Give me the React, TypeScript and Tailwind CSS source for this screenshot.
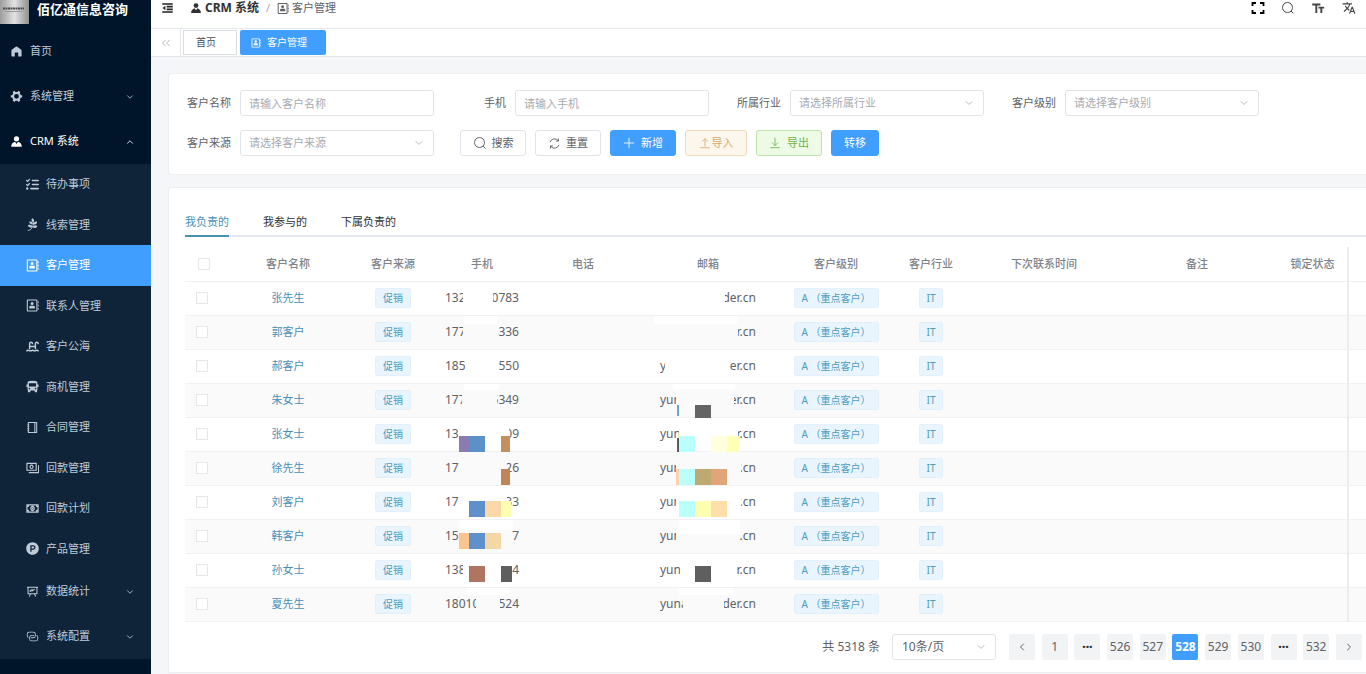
import React from 'react';
import { ChevronDown, ChevronLeft, ChevronRight, ChevronUp, ChevronsLeft } from 'lucide-react';
import { FaListCheck, FaPagelines, FaProductHunt, FaWaterLadder } from 'react-icons/fa6';
import { MdFormatSize, MdTranslate } from 'react-icons/md';
import clsx from 'clsx';

type IconProps = { className?: string };
type IconType = React.ComponentType<IconProps>;

const filledIcon = (d: string): React.FC<IconProps> => ({ className }) => (
  <svg viewBox="0 0 1024 1024" fill="currentColor" fillRule="evenodd" className={className} aria-hidden="true">
    <path d={d} />
  </svg>
);

const HomeIcon = filledIcon('M512 110 Q540 110 570 134L880 380Q912 408 912 448V850Q912 900 862 900H650V650Q650 600 600 600H424Q374 600 374 650V900H162Q112 900 112 850V448Q112 408 144 380L454 134Q484 110 512 110z');
const ToolsIcon = filledIcon('M764.416 254.72a351.68 351.68 0 0 1 86.336 149.184H960v192.064H850.752a351.68 351.68 0 0 1-86.336 149.312l54.72 94.72-166.272 96-54.592-94.72a352.64 352.64 0 0 1-172.48 0L371.136 936l-166.272-96 54.72-94.72a351.68 351.68 0 0 1-86.336-149.312H64v-192h109.248a351.68 351.68 0 0 1 86.336-149.312L204.8 160l166.208-96h.192l54.656 94.592a352.64 352.64 0 0 1 172.48 0L652.8 64h.128L819.2 160l-54.72 94.72zM704 499.968a192 192 0 1 0-384 0 192 192 0 0 0 384 0z');
const AvatarIcon = filledIcon('M628.736 528.896A416 416 0 0 1 928 928H96a415.872 415.872 0 0 1 299.264-399.104L512 704l116.736-175.104zM720 304a208 208 0 1 1-416 0 208 208 0 0 1 416 0z');
const LinkIcon = filledIcon('M640 384v64H448a128 128 0 0 0-128 128v128a128 128 0 0 0 128 128h320a128 128 0 0 0 128-128V576a128 128 0 0 0-64-110.848V394.88c74.56 26.368 128 97.472 128 181.056v128a192 192 0 0 1-192 192H448a192 192 0 0 1-192-192V576a192 192 0 0 1 192-192h192zM384 640v-64h192a128 128 0 0 0 128-128V320a128 128 0 0 0-128-128H256a128 128 0 0 0-128 128v128a128 128 0 0 0 64 110.848v70.272A192.064 192.064 0 0 1 64 448V320a192 192 0 0 1 192-192h320a192 192 0 0 1 192 192v128a192 192 0 0 1-192 192H384z');
const FoldIcon = filledIcon('M64 110h896v130H64zM440 330h520v130H440zM440 564h520v130H440zM64 784h896v130H64zM330 330v364L90 512z');
const ContactIcon = filledIcon('M60 110q0-70 70-70h700q70 0 70 70v804q0 70-70 70H130q-70 0-70-70zM145 125v774h670V125zM480 240a120 120 0 1 1 0 240a120 120 0 1 1 0-240zM260 740V640q0-110 110-110h220q110 0 110 110v100zM930 180h64v160h-64zM930 430h64v160h-64zM930 680h64v160h-64z');
const BusIcon = filledIcon('M512 50q300 0 370 90q20 30 20 90v120h60q30 0 30 30v150q0 30-30 30h-60v200q0 40-30 50v110q0 50-50 50h-90q-50 0-50-50v-100H342v100q0 50-50 50h-90q-50 0-50-50V810q-30-10-30-50V560H62q-30 0-30-30V380q0-30 30-30h60V230q0-60 20-90Q212 50 512 50zM230 250v260h564V250zM270 620a60 60 0 1 0 0 120a60 60 0 1 0 0-120zM754 620a60 60 0 1 0 0 120a60 60 0 1 0 0-120z');

const lineIcon = (d: string, strokeWidth = 1): React.FC<IconProps> => ({ className }) => (
  <svg viewBox="0 0 14 14" fill="none" stroke="currentColor" strokeWidth={strokeWidth} className={className} aria-hidden="true">
    <path d={d} />
  </svg>
);

const NotebookIcon = lineIcon('M2.5 1.500h9v11h-9zM9.500 1.500v11M1.500 4h2M1.500 6h2M1.500 8h2M1.500 10h2', 1.1);
const CashStackIcon = lineIcon('M1 2.500h10v7.500h-10zM3 12.500h10.500v-8M6 4.500a1.600 1.800 0 1 0 .01 0z', 1.2);
const BanknoteIcon = lineIcon('M1 3h12v8h-12zM1 5.200q2 0 2-2M13 5.200q-2 0-2-2M1 8.800q2 0 2 2M13 8.800q-2 0-2 2M7 4.800a1.800 2.200 0 1 0 .01 0zM7 6v2', 1.3);
const BoardIcon = lineIcon('M1 2.500h12M2.200 2.500v7h9.600v-7M5 9.500l-1.500 3M9 9.500l1.500 3M4.500 7.500v-1.500l2-1v1.500l3-2', 1.1);
const SearchIcon = lineIcon('M6.500 1.500a5 5 0 1 0 .01 0zM10 10l2.500 2.500');
const RefreshIcon = lineIcon('M2.200 5.600A5 5 0 0 1 11 4M11.300 1.600v2.800h-2.800M11.800 8.400A5 5 0 0 1 3 10M2.700 12.400v-2.800h2.800');
const PlusIcon = lineIcon('M7 1v12M1 7h12');
const UploadIcon = lineIcon('M7 11v-9M3.500 5.500l3.500-3.500 3.500 3.500M1.500 12.500h11');
const DownloadIcon = lineIcon('M7 1v9M3.500 6.500l3.500 3.500 3.500-3.500M1.500 12.500h11');
const FullscreenIcon = lineIcon('M1.500 5v-3h3.500M9 2h3.500v3M12.500 9v3h-3.500M5 12h-3.500v-3', 1.8);

const SUB_MENU: { label: string; icon: IconType; active?: boolean }[] = [
  { label: '待办事项', icon: FaListCheck },
  { label: '线索管理', icon: FaPagelines },
  { label: '客户管理', icon: ContactIcon, active: true },
  { label: '联系人管理', icon: ContactIcon },
  { label: '客户公海', icon: FaWaterLadder },
  { label: '商机管理', icon: BusIcon },
  { label: '合同管理', icon: NotebookIcon },
  { label: '回款管理', icon: CashStackIcon },
  { label: '回款计划', icon: BanknoteIcon },
  { label: '产品管理', icon: FaProductHunt },
];

interface MenuItemProps {
  label: string;
  icon: IconType;
  nested?: boolean;
  open?: boolean;
  expandable?: boolean;
}

const MenuItem: React.FC<MenuItemProps> = ({ label, icon: Icon, nested, open, expandable }) => (
  <a
    href="#"
    className={clsx('flex h-[45px] items-center gap-[7px] pr-4', nested ? 'pl-[26px]' : 'pl-[10px]', open ? 'text-white' : 'text-[#bfcbd9]')}
  >
    <Icon className="h-[13px] w-[13px]" />
    <span className="flex-1">{label}</span>
    {expandable && (open ? <ChevronUp className="h-[10px] w-[10px]" /> : <ChevronDown className="h-[10px] w-[10px]" />)}
  </a>
);

const Sidebar: React.FC = () => (
  <aside className="w-[151px] shrink-0 bg-[#001529] text-[11px]">
    <div className="flex h-[29px] items-start gap-2">
      <svg viewBox="0 0 29 24" className="h-6 w-[29px]" aria-hidden="true">
        <defs>
          <linearGradient id="logo" x1="0" y1="0" x2="1" y2="0">
            <stop offset="0" stopColor="#9c9c9c" />
            <stop offset="0.5" stopColor="#e2e2e2" />
            <stop offset="1" stopColor="#8f8f8f" />
          </linearGradient>
        </defs>
        <rect width="29" height="24" fill="url(#logo)" />
        <path d="M3 8.500h21" stroke="#4d4d4d" strokeWidth="2" strokeDasharray="2 .5" />
        <path d="M5 11.500h17" stroke="#9a9a9a" />
      </svg>
      <h1 className="text-[13px] leading-[18px] font-bold whitespace-nowrap text-white">佰亿通信息咨询</h1>
    </div>
    <nav>
      <MenuItem label="首页" icon={HomeIcon} />
      <MenuItem label="系统管理" icon={ToolsIcon} expandable />
      <MenuItem label="CRM 系统" icon={AvatarIcon} expandable open />
      <div className="bg-[#0f2438]">
        <div className="grid h-[405px] auto-rows-fr">
          {SUB_MENU.map(({ label, icon: Icon, active }) => (
            <a
              key={label}
              href="#"
              className={clsx('flex items-center gap-[7px] pl-[26px]', active ? 'bg-[#409eff] text-white' : 'text-[#bfcbd9]')}
            >
              <Icon className="h-[13px] w-[13px]" />
              {label}
            </a>
          ))}
        </div>
        <MenuItem label="数据统计" icon={BoardIcon} nested expandable />
        <MenuItem label="系统配置" icon={LinkIcon} nested expandable />
      </div>
    </nav>
  </aside>
);

const Header: React.FC = () => (
  <header className="bg-white">
    <div className="flex h-[29px] items-center justify-between border-b border-[#e4e7ed] pr-[10px] pb-3 pl-[10px]">
      <div className="flex items-center">
        <button type="button" aria-label="折叠菜单" className="mr-4 text-[#222]">
          <FoldIcon className="h-3 w-[13px]" />
        </button>
        <nav className="flex items-center text-[11px] text-[#606266]">
          <a href="#" className="flex items-center gap-[3px] text-[12px] font-bold text-[#303133]">
            <AvatarIcon className="h-3 w-3" />
            CRM 系统
          </a>
          <span className="mx-[7px] text-[#a8abb2]">/</span>
          <ContactIcon className="mr-[3px] h-[13px] w-3" />
          客户管理
        </nav>
      </div>
      <div className="flex items-center gap-4 text-[#444]">
        <button type="button" aria-label="全屏" className="text-black"><FullscreenIcon className="h-[14px] w-[14px]" /></button>
        <button type="button" aria-label="搜索"><SearchIcon className="h-[14px] w-[14px]" /></button>
        <button type="button" aria-label="字号"><MdFormatSize className="h-[15px] w-[15px] -scale-x-100" /></button>
        <button type="button" aria-label="语言"><MdTranslate className="h-[14px] w-[14px]" /></button>
      </div>
    </div>
    <div className="flex h-7 items-center border-b border-[#e4e7ed] text-[10px]">
      <button type="button" aria-label="向左滚动" className="mr-[2px] flex h-full w-[30px] items-center justify-center border-r border-[#e4e7ed] text-[#a8abb2]">
        <ChevronsLeft className="h-[14px] w-[14px]" strokeWidth={1.5} />
      </button>
      <a href="#" className="mr-[3px] flex h-[25px] w-[54px] items-center justify-center border border-[#d8dce5] pr-2 text-[#495060]">首页</a>
      <a href="#" className="flex h-[25px] w-[86px] items-center gap-[6px] rounded-[2px] bg-[#409eff] pl-[11px] text-white">
        <ContactIcon className="h-[10px] w-[10px]" />
        客户管理
      </a>
    </div>
  </header>
);

interface FieldProps {
  id: string;
  label: string;
  placeholder: string;
  select?: boolean;
}

const Field: React.FC<FieldProps> = ({ id, label, placeholder, select }) => (
  <div className="flex items-center gap-[9px]">
    <label htmlFor={id} className="w-[46px] text-right whitespace-nowrap text-[#606266]">{label}</label>
    {select ? (
      <div className="relative">
        <select id={id} className="h-[26px] w-[194px] appearance-none rounded-[3px] border border-[#e0e3e9] bg-white px-2 text-[#a8abb2]">
          <option>{placeholder}</option>
        </select>
        <ChevronDown className="pointer-events-none absolute top-[7px] right-[9px] h-3 w-3 text-[#b8bbc2]" strokeWidth={2} />
      </div>
    ) : (
      <input id={id} type="text" placeholder={placeholder} className="h-[26px] w-[194px] rounded-[3px] border border-[#e0e3e9] bg-white px-2 placeholder:text-[#a8abb2]" />
    )}
  </div>
);

const BUTTON = 'flex h-[26px] items-center justify-center rounded-[3px] border';

const SearchPanel: React.FC = () => (
  <section className="rounded-l-[3px] border border-r-0 border-[#eceef2] bg-white px-4 pt-4 pb-[18px]">
    <form className="flex flex-wrap gap-x-[26px] gap-y-[14px]">
      <Field id="name" label="客户名称" placeholder="请输入客户名称" />
      <Field id="phone" label="手机" placeholder="请输入手机" />
      <Field id="industry" label="所属行业" placeholder="请选择所属行业" select />
      <Field id="level" label="客户级别" placeholder="请选择客户级别" select />
      <Field id="source" label="客户来源" placeholder="请选择客户来源" select />
      <div className="flex gap-[9px]">
        <button type="button" className={clsx(BUTTON, 'w-[66px] gap-[5px] border-[#e0e3e9] bg-white text-[#606266]')}>
          <SearchIcon className="h-[14px] w-[14px]" />搜索
        </button>
        <button type="button" className={clsx(BUTTON, 'w-[66px] gap-[5px] border-[#e0e3e9] bg-white text-[#606266]')}>
          <RefreshIcon className="h-[13px] w-[13px]" />重置
        </button>
        <button type="button" className={clsx(BUTTON, 'w-[66px] gap-[6px] border-[#409eff] bg-[#409eff] text-white')}>
          <PlusIcon className="h-3 w-3" />新增
        </button>
        <button type="button" className={clsx(BUTTON, 'w-[62px] gap-[1px] border-[#f0dcbb] bg-[#fdf6ec] text-[#d3ab6c]')}>
          <UploadIcon className="h-3 w-3" />导入
        </button>
        <button type="button" className={clsx(BUTTON, 'w-[66px] gap-[6px] border-[#bfe3ad] bg-[#edfae6] text-[#6fb24d]')}>
          <DownloadIcon className="h-3 w-3" />导出
        </button>
        <button type="button" className={clsx(BUTTON, 'w-12 border-[#409eff] bg-[#409eff] text-white')}>转移</button>
      </div>
    </form>
  </section>
);

// left, top, width, height, color
type Block = [number, number, number, number, string];

interface MaskedValue {
  head: string;
  headWidth: number;
  tail: string;
  tailWidth: number;
  blocks?: Block[];
}

interface Customer {
  name: string;
  phone: MaskedValue;
  email: MaskedValue;
}

const CUSTOMERS: Customer[] = [
  {
    name: '张先生',
    phone: { head: '132', headWidth: 18, tail: '0783', tailWidth: 26 },
    email: { head: '', headWidth: 0, tail: 'der.cn', tailWidth: 31 },
  },
  {
    name: '郭客户',
    phone: { head: '177', headWidth: 18, tail: '8336', tailWidth: 21, blocks: [[19, 0, 33, 8, '#fff']] },
    email: { head: '', headWidth: 0, tail: 'r.cn', tailWidth: 18, blocks: [[-6, 0, 83, 8, '#fff']] },
  },
  {
    name: '郝客户',
    phone: { head: '185', headWidth: 20, tail: '550', tailWidth: 21 },
    email: { head: 'y', headWidth: 5, tail: 'er.cn', tailWidth: 26 },
  },
  {
    name: '朱女士',
    phone: { head: '177', headWidth: 17, tail: '5349', tailWidth: 22, blocks: [[19, 0, 34, 6, '#fff']] },
    email: { head: 'yun', headWidth: 16, tail: 'er.cn', tailWidth: 22, blocks: [[13, 0, 62, 5, '#fff'], [17, 21, 2, 11, '#6ea3cf'], [35, 21, 16, 16, '#646464']] },
  },
  {
    name: '张女士',
    phone: { head: '13', headWidth: 14, tail: '09', tailWidth: 10, blocks: [[14, 18, 10, 16, '#8a7bb0'], [24, 18, 16, 16, '#5b90c8'], [56, 18, 9, 16, '#c4905f']] },
    email: { head: 'yun', headWidth: 19, tail: 'r.cn', tailWidth: 18, blocks: [[17, 20, 2, 14, '#55605f'], [19, 18, 16, 16, '#b9fffb'], [51, 18, 16, 16, '#ffffde'], [67, 18, 12, 16, '#ffffb5']] },
  },
  {
    name: '徐先生',
    phone: { head: '17', headWidth: 14, tail: '26', tailWidth: 12, blocks: [[56, 17, 9, 16, '#c08558']] },
    email: { head: 'yun', headWidth: 16, tail: 'r.cn', tailWidth: 15, blocks: [[16, 17, 3, 16, '#fcd0b0'], [19, 17, 16, 16, '#b9fffa'], [35, 17, 16, 16, '#bfa973'], [51, 17, 16, 16, '#e0a67a']] },
  },
  {
    name: '刘客户',
    phone: { head: '17', headWidth: 14, tail: '33', tailWidth: 12, blocks: [[24, 15, 16, 16, '#6090cb'], [40, 15, 16, 16, '#fcd7a8'], [56, 15, 10, 16, '#ffffb0']] },
    email: { head: 'yun', headWidth: 16, tail: 'r.cn', tailWidth: 15, blocks: [[19, 15, 16, 16, '#b9fffa'], [35, 15, 16, 16, '#ffffb0'], [51, 15, 16, 16, '#fddfa9']] },
  },
  {
    name: '韩客户',
    phone: { head: '15', headWidth: 14, tail: '7', tailWidth: 8, blocks: [[14, 0, 54, 10, '#fff'], [14, 13, 10, 16, '#fdc48d'], [24, 13, 16, 16, '#6090cb'], [40, 13, 16, 16, '#f3d8a6']] },
    email: { head: 'yun', headWidth: 16, tail: '.cn', tailWidth: 16, blocks: [[19, 0, 61, 14, '#fff']] },
  },
  {
    name: '孙女士',
    phone: { head: '138', headWidth: 18, tail: '4', tailWidth: 8, blocks: [[24, 12, 16, 16, '#b07560'], [56, 12, 11, 16, '#5f5f5f']] },
    email: { head: 'yun', headWidth: 20, tail: 'r.cn', tailWidth: 19, blocks: [[35, 12, 16, 16, '#5f5f5f']] },
  },
  {
    name: '夏先生',
    phone: { head: '18010', headWidth: 31, tail: '524', tailWidth: 19, blocks: [[22, 0, 42, 7, '#fff']] },
    email: { head: 'yuna', headWidth: 23, tail: 'der.cn', tailWidth: 32, blocks: [[19, 0, 54, 7, '#fff']] },
  },
];

const Masked: React.FC<{ value: MaskedValue; className: string }> = ({ value, className }) => (
  <div className={clsx('relative mx-auto flex h-[33px] items-center justify-between bg-inherit text-[12px] text-[#606266]', className)}>
    <span>{value.head}</span>
    <span>{value.tail}</span>
    {/* hides the middle part and the edges of the characters next to it */}
    <i className="absolute inset-y-0 bg-inherit" style={{ left: value.headWidth, right: value.tailWidth }} />
    {(value.blocks ?? []).map(([left, top, width, height, background]) => (
      <i key={`${left}-${top}`} className="absolute" style={{ left, top, width, height, background }} />
    ))}
  </div>
);

const Tag: React.FC<{ children: React.ReactNode }> = ({ children }) => (
  <span className="inline-flex h-5 items-center rounded-[2px] border border-[#e1f0fd] bg-[#eaf4fd] px-[7px] text-[10px] whitespace-nowrap text-[#4a9dbd]">
    {children}
  </span>
);

const Checkbox: React.FC<{ label: string }> = ({ label }) => (
  <input type="checkbox" aria-label={label} className="block h-3 w-3 appearance-none border border-[#e4e6ea] bg-white" />
);

const FIXED_EDGE = 'border-l-2 border-l-[#ececec]';

const CustomerTable: React.FC = () => (
  <table className="mt-[10px] w-full table-fixed border-collapse text-center text-[11px]">
    <colgroup>
      <col className="w-[37px]" />
      <col className="w-[132px]" />
      <col className="w-[78px]" />
      <col className="w-[100px]" />
      <col className="w-[102px]" />
      <col className="w-[148px]" />
      <col className="w-[108px]" />
      <col className="w-[82px]" />
      <col className="w-[144px]" />
      <col className="w-[162px]" />
      <col className="w-[70px]" />
      <col />
    </colgroup>
    <thead>
      <tr className="h-[34px] border-b border-[#f0f1f4] text-[#808388]">
        <th className="pl-[13px]"><Checkbox label="全选" /></th>
        {['客户名称', '客户来源', '手机', '电话', '邮箱', '客户级别', '客户行业', '下次联系时间', '备注', '锁定状态'].map((title) => (
          <th key={title} className="font-medium whitespace-nowrap">{title}</th>
        ))}
        <th className={FIXED_EDGE} />
      </tr>
    </thead>
    <tbody>
      {CUSTOMERS.map(({ name, phone, email }) => (
        <tr key={name} className="h-[34px] border-b border-[#f0f1f4] odd:bg-white even:bg-[#fafafa]">
          <td className="pl-[11px]"><Checkbox label={name} /></td>
          <td><a href="#" className="text-[#4a90b8]">{name}</a></td>
          <td><Tag>促销</Tag></td>
          <td className="bg-inherit p-0"><Masked value={phone} className="w-[74px]" /></td>
          <td />
          <td className="bg-inherit p-0"><Masked value={email} className="w-24" /></td>
          <td><Tag>A （重点客户）</Tag></td>
          <td><Tag>IT</Tag></td>
          <td />
          <td />
          <td />
          <td className={FIXED_EDGE} />
        </tr>
      ))}
    </tbody>
  </table>
);

const PAGES = ['1', '···', '526', '527', '528', '529', '530', '···', '532'];
const PAGE_BUTTON = 'flex h-[26px] w-[26px] items-center justify-center rounded-[2px]';

const Pagination: React.FC = () => (
  <div className="mt-3 flex items-center justify-end pr-1 text-[12px] text-[#606266]">
    <span className="mr-3">共 5318 条</span>
    <div className="relative mr-[13px]">
      <select aria-label="每页条数" className="h-[26px] w-[104px] appearance-none rounded-[3px] border border-[#e0e3e9] bg-white px-[9px]">
        <option>10条/页</option>
      </select>
      <ChevronDown className="pointer-events-none absolute top-[7px] right-[9px] h-3 w-3 text-[#b8bbc2]" strokeWidth={2} />
    </div>
    <div className="flex w-[353px] justify-between">
      <button type="button" aria-label="上一页" className={clsx(PAGE_BUTTON, 'bg-[#f2f3f5]')}><ChevronLeft className="h-3 w-3" /></button>
      {PAGES.map((page, i) => (
        <button
          key={i}
          type="button"
          className={clsx(PAGE_BUTTON, page === '528' ? 'bg-[#409eff] font-bold text-white' : 'bg-[#f2f3f5]', page === '···' && 'font-black text-[#303133]')}
        >
          {page}
        </button>
      ))}
      <button type="button" aria-label="下一页" className={clsx(PAGE_BUTTON, 'bg-[#f2f3f5]')}><ChevronRight className="h-3 w-3" /></button>
    </div>
  </div>
);

const CustomerPanel: React.FC = () => (
  <section className="mt-3 rounded-l-[3px] border border-r-0 border-[#eceef2] bg-white pt-[18px] pb-3 pl-4">
    <div role="tablist" className="flex h-[31px] gap-[34px] text-[11px] text-[#303133] shadow-[inset_0_-2px_#e4e7ed]">
      <button type="button" role="tab" aria-selected="true" className="border-b-2 border-[#4a90b0] pt-1 text-[#4a90b8]">我负责的</button>
      <button type="button" role="tab" aria-selected="false" className="border-b-2 border-transparent pt-1">我参与的</button>
      <button type="button" role="tab" aria-selected="false" className="border-b-2 border-transparent pt-1">下属负责的</button>
    </div>
    <CustomerTable />
    <Pagination />
  </section>
);

export default function App() {
  return (
    <div className="flex min-h-screen bg-[#f5f6f8] font-['Noto_Sans','Noto_Sans_CJK_SC',sans-serif]">
      <Sidebar />
      <div className="min-w-0 flex-1">
        <Header />
        <main className="pt-4 pl-[17px] text-[11px]">
          <SearchPanel />
          <CustomerPanel />
        </main>
      </div>
    </div>
  );
}
